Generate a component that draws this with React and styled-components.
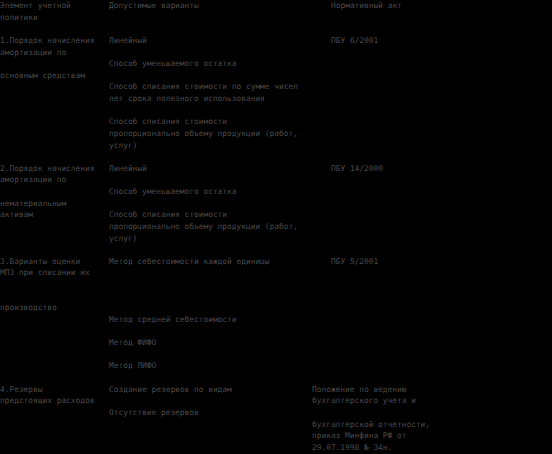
import React from 'react';
import styled, { createGlobalStyle } from 'styled-components';

const lineHeight = 11.63; // px, one text line of the document

const GlobalStyle = createGlobalStyle`
  html, body {
    margin: 0;
    padding: 0;
    background: #000;
  }
`;

const Page = styled.div`
  width: 552px;
  height: 454px;
  overflow: hidden;
  background: #000;
  color: #4a4a4a;
  font-family: "DejaVu Sans Mono", "Liberation Mono", monospace;
  font-size: 7.85px;
  line-height: ${lineHeight}px;
`;

const Table = styled.div`
  display: flex;
  flex-direction: column;
  row-gap: ${lineHeight}px;
`;

const Row = styled.div`
  display: grid;
  grid-template-columns: 109px ${p => p.$middle || 222}px 1fr;
`;

const Cell = styled.div`
  display: flex;
  flex-direction: column;
`;

const Line = styled.div`
  height: ${lineHeight}px;
  white-space: pre;
`;

const rows = [
  {
    cells: [['Элемент учетной', 'политики'], ['Допустимые варианты'], ['Нормативный акт']],
  },
  {
    cells: [
      ['1.Порядок начисления', 'амортизации по', '', 'основным средствам'],
      [
        'Линейный',
        '',
        'Способ уменьшаемого остатка',
        '',
        'Способ списания стоимости по сумме чисел',
        'лет срока полезного использования',
        '',
        'Способ списания стоимости',
        'пропорционально объему продукции (работ,',
        'услуг)',
      ],
      ['ПБУ 6/2001'],
    ],
  },
  {
    cells: [
      ['2.Порядок начисления', 'амортизации по', '', 'нематериальным', 'активам'],
      [
        'Линейный',
        '',
        'Способ уменьшаемого остатка',
        '',
        'Способ списания стоимости',
        'пропорционально объему продукции (работ,',
        'услуг)',
      ],
      ['ПБУ 14/2000'],
    ],
  },
  {
    cells: [
      ['3.Варианты оценки', 'МПЗ при списании их', '', '', 'производство'],
      [
        'Метод себестоимости каждой единицы',
        '',
        '',
        '',
        '',
        'Метод средней себестоимости',
        '',
        'Метод ФИФО',
        '',
        'Метод ЛИФО',
      ],
      ['ПБУ 5/2001'],
    ],
  },
  {
    middle: 203,
    cells: [
      ['4.Резервы', 'предстоящих расходов'],
      ['Создание резервов по видам', '', 'Отсутствие резервов'],
      [
        'Положение по ведению',
        'бухгалтерского учета и',
        '',
        'бухгалтерской отчетности,',
        'приказ Минфина РФ от',
        '29.07.1998 № 34н.',
      ],
    ],
  },
];

export default function App() {
  return (
    <Page>
      <GlobalStyle />
      <Table>
        {rows.map((row, i) => (
          <Row key={i} $middle={row.middle}>
            {row.cells.map((lines, j) => (
              <Cell key={j}>
                {lines.map((text, k) => (
                  <Line key={k}>{text}</Line>
                ))}
              </Cell>
            ))}
          </Row>
        ))}
      </Table>
    </Page>
  );
}
